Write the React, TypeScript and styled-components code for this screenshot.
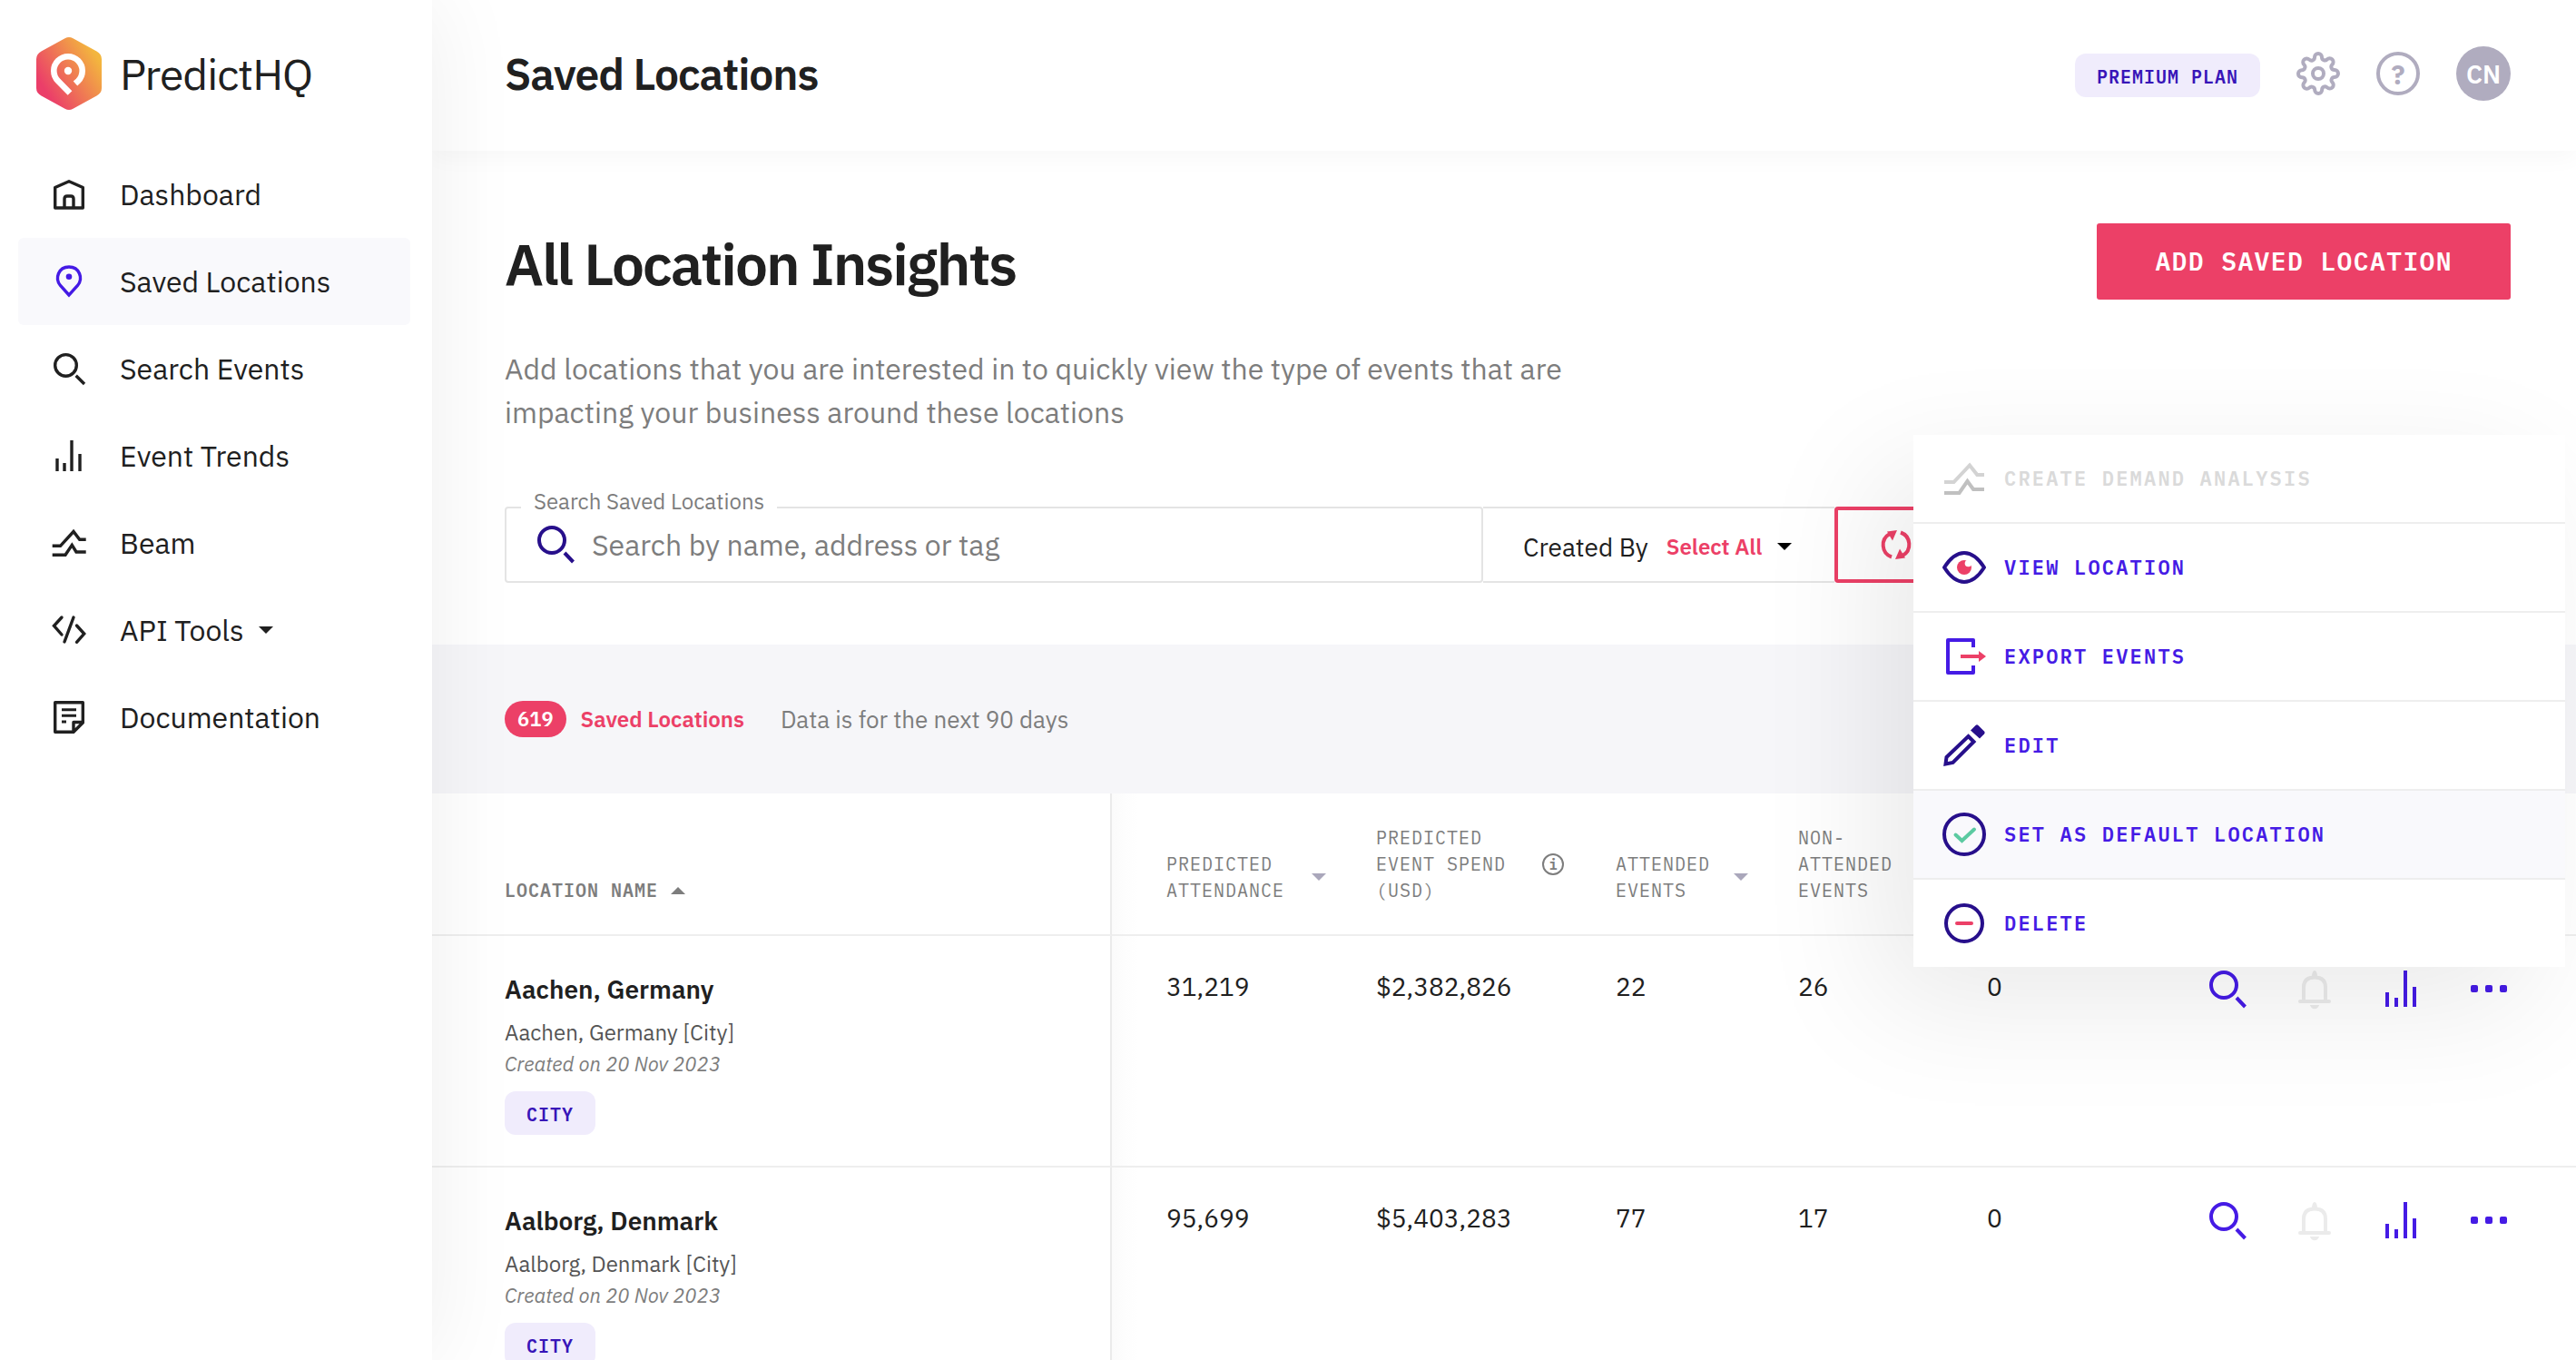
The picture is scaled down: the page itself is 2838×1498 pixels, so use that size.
import React from "react";
import styled, { createGlobalStyle, css } from "styled-components";
import { FiSettings } from "react-icons/fi";

const color = {
  ink: "#202020",
  grey: "#7d7d7d",
  line: "#e4e4e4",
  rule: "#eeeeee",
  pink: "#ec4067",
  violet: "#451be5",
  navy: "#270f8b",
  green: "#5bcaa1",
  muted: "#b0acbf",
  tint: "#f0ecfc",
  tintText: "#3815b8",
  hover: "#f9f9fc",
  band: "#f6f6f9",
};

const sans = `"IBM Plex Sans", Roboto, "Open Sans", sans-serif`;
const mono = `"IBM Plex Mono", "Liberation Mono", monospace`;

const GlobalStyle = createGlobalStyle`
  *, *::before, *::after { box-sizing: border-box; }
  body { margin: 0; background: #fff; color: ${color.ink}; font-family: ${sans}; }
  h1, h2, p, ul { margin: 0; padding: 0; }
  ul { list-style: none; }
  button, input, select { font-family: inherit; color: inherit; }
  button { margin: 0; padding: 0; border: 0; background: none; cursor: pointer; }
  svg { display: block; flex: none; }
`;

/* ---------- Layout shell ---------- */

const Page = styled.div`
  display: flex;
  height: 100vh;
  overflow: hidden;
`;

const Sidebar = styled.aside`
  position: relative;
  z-index: 3;
  flex: none;
  width: 476px;
  background: #fff;
  box-shadow: 0 0 96px rgba(0, 0, 0, 0.07);
`;

const Content = styled.div`
  flex: 1;
  min-width: 0;
  display: flex;
  flex-direction: column;
`;

const Header = styled.header`
  position: relative;
  z-index: 1;
  display: flex;
  flex: none;
  align-items: flex-start;
  justify-content: space-between;
  height: 166px;
  padding: 51px 72px 0 80px;
  background: #fff;
  box-shadow: 0 8px 24px rgba(0, 0, 0, 0.03);
`;

/* ---------- Sidebar ---------- */

const Brand = styled.a`
  display: flex;
  align-items: center;
  gap: 20px;
  padding: 41px 40px 45px;
  color: ${color.ink};
  font-size: 48px;
  letter-spacing: -1px;
  line-height: 80px;
  text-decoration: none;
`;

const NavList = styled.ul`
  padding: 0 24px 0 20px;
`;

const NavLink = styled.a<{ $active?: boolean }>`
  display: flex;
  align-items: center;
  height: 96px;
  padding-left: 36px;
  gap: 36px;
  border-radius: 6px;
  background: ${(p) => (p.$active ? color.hover : "transparent")};
  color: ${color.ink};
  font-size: 32px;
  text-decoration: none;

  & > svg {
    color: ${(p) => (p.$active ? color.violet : color.ink)};
  }
`;

const NavText = styled.span`
  display: flex;
  align-items: center;
  gap: 16px;
`;

/* ---------- Header ---------- */

const PageTitle = styled.h1`
  font-size: 48px;
  font-weight: 600;
  letter-spacing: -1px;
  line-height: 60px;
`;

const HeaderTools = styled.div`
  display: flex;
  align-items: center;
  gap: 40px;
  height: 60px;
`;

const Badge = styled.span`
  display: inline-flex;
  align-items: center;
  height: 48px;
  padding: 4px 24px 0;
  border-radius: 12px;
  background: ${color.tint};
  color: ${color.tintText};
  font: 600 20px/24px ${mono};
  letter-spacing: 1px;
  text-transform: uppercase;
`;

const PlanBadge = styled(Badge)`
  align-self: flex-end;
  margin-bottom: 4px;
`;

const ToolButton = styled.button`
  display: flex;
  align-items: center;
  justify-content: center;
  width: 48px;
  height: 48px;
  color: ${color.muted};
`;

const HelpButton = styled(ToolButton)`
  border: 4px solid ${color.muted};
  border-radius: 50%;
  font-size: 30px;
  font-weight: 700;
`;

const Avatar = styled.button`
  width: 60px;
  height: 60px;
  border-radius: 50%;
  background: ${color.muted};
  color: #fff;
  font-size: 28px;
  font-weight: 600;
`;

/* ---------- Intro ---------- */

const Intro = styled.section`
  padding: 80px 72px 68px 80px;
`;

const IntroTop = styled.div`
  display: flex;
  align-items: flex-start;
  justify-content: space-between;
`;

const Heading = styled.h2`
  font-size: 64px;
  font-weight: 600;
  letter-spacing: -2px;
  line-height: 88px;
`;

const PrimaryButton = styled.button`
  height: 84px;
  padding: 0 64px;
  border-radius: 3px;
  background: ${color.pink};
  color: #fff;
  font: 600 28px/40px ${mono};
  letter-spacing: 0.05em;
  text-transform: uppercase;
`;

const Lead = styled.p`
  max-width: 1200px;
  margin-top: 48px;
  color: ${color.grey};
  font-size: 32px;
  line-height: 48px;
`;

const Filters = styled.div`
  display: flex;
  height: 84px;
  margin-top: 80px;
`;

const SearchField = styled.div`
  position: relative;
  display: flex;
  align-items: center;
  gap: 16px;
  width: 1078px;
  padding: 0 30px;
  border: 2px solid ${color.line};
  border-radius: 4px;
  color: ${color.navy};
`;

const FieldLabel = styled.label`
  position: absolute;
  top: -22px;
  left: 16px;
  padding: 0 14px;
  background: #fff;
  color: ${color.grey};
  font-size: 24px;
  line-height: 28px;
`;

const SearchInput = styled.input`
  flex: 1;
  min-width: 0;
  padding: 0;
  border: 0;
  outline: 0;
  background: none;
  font-size: 32px;
  line-height: 40px;

  &::placeholder {
    color: ${color.grey};
    opacity: 1;
  }
`;

const CreatedBy = styled.div`
  display: flex;
  align-items: center;
  width: 387px;
  padding: 4px 0 0 44px;
  border: solid ${color.line};
  border-width: 2px 0;
`;

const CreatedLabel = styled.label`
  margin-right: 20px;
  font-size: 28px;
`;

const CreatedSelect = styled.select`
  margin-right: 16px;
  padding: 0;
  border: 0;
  outline: 0;
  appearance: none;
  background: none;
  color: ${color.pink};
  font-size: 24px;
  font-weight: 600;
`;

const RefreshButton = styled.button`
  display: flex;
  align-items: center;
  justify-content: center;
  width: 136px;
  border: 4px solid ${color.pink};
  border-radius: 4px;
  color: ${color.pink};
`;

/* ---------- Summary band ---------- */

const Summary = styled.section`
  display: flex;
  align-items: center;
  height: 164px;
  padding: 0 80px;
  background: ${color.band};
`;

const Count = styled.span`
  padding: 0 14px;
  border-radius: 20px;
  background: ${color.pink};
  color: #fff;
  font-size: 22px;
  font-weight: 600;
  line-height: 40px;
`;

const CountLabel = styled.span`
  margin: 0 40px 0 16px;
  color: ${color.pink};
  font-size: 24px;
  font-weight: 600;
`;

const Note = styled.span`
  color: ${color.grey};
  font-size: 26px;
`;

/* ---------- Table ---------- */

const Table = styled.table`
  width: 100%;
  table-layout: fixed;
  border-collapse: separate;
  border-spacing: 0;
`;

const Col = styled.col<{ $width?: number }>`
  ${(p) => p.$width && css`width: ${p.$width}px;`}
`;

const cellBase = css`
  padding: 0;
  border-bottom: 2px solid ${color.rule};
  text-align: left;

  &:first-child {
    padding-left: 80px;
    border-right: 2px solid #ebebeb;
  }

  &:nth-child(2) {
    padding-left: 60px;
    background: linear-gradient(to right, #fbfbfb, #fff 28px);
  }
`;

const HeadCell = styled.th`
  ${cellBase}
  height: 157px;
  padding-bottom: 34px;
  vertical-align: bottom;
`;

const SortButton = styled.button<{ $bold?: boolean; $gap: number }>`
  display: flex;
  align-items: center;
  gap: ${(p) => p.$gap}px;
  color: ${color.grey};
  font: ${(p) => (p.$bold ? 600 : 400)} 20px/29px ${mono};
  letter-spacing: 1px;
  text-align: left;
  text-transform: uppercase;
  white-space: pre;
`;

const InfoMark = styled.span`
  display: flex;
  align-items: center;
  justify-content: center;
  width: 24px;
  height: 24px;
  border: 2px solid ${color.grey};
  border-radius: 50%;
  font: 600 16px/20px ${mono};
  letter-spacing: 0;
  text-transform: none;
`;

const Cell = styled.td`
  ${cellBase}
  height: 255px;
  padding-top: 35px;
  vertical-align: top;
  font-size: 28px;
  line-height: 42px;
`;

const NameCell = styled(Cell)`
  padding-top: 39px;
`;

const PlaceName = styled.a`
  display: block;
  color: ${color.ink};
  font-size: 28px;
  font-weight: 600;
  line-height: 40px;
  text-decoration: none;
`;

const PlaceAddress = styled.div`
  margin-top: 10px;
  color: #555;
  font-size: 24px;
  line-height: 34px;
`;

const PlaceDate = styled.div`
  margin-bottom: 12px;
  color: ${color.grey};
  font-size: 22px;
  font-style: italic;
  line-height: 36px;
`;

const PlaceTag = styled(Badge)`
  display: flex;
  width: max-content;
`;

const LastColumn = styled.div`
  display: flex;
  justify-content: space-between;
`;

const Actions = styled.div`
  display: flex;
  gap: 48px;
  padding-right: 72px;
`;

const IconButton = styled.button`
  display: block;
  width: 48px;
  height: 48px;
  color: ${color.violet};

  &:disabled {
    color: #ebebeb;
    cursor: default;
  }
`;

/* ---------- Row menu ---------- */

const MenuAnchor = styled.div`
  position: relative;
`;

const Menu = styled.div`
  position: absolute;
  right: -60px;
  bottom: calc(100% + 1px);
  z-index: 2;
  width: 718px;
  background: #fff;
  box-shadow: -40px 40px 128px rgba(0, 0, 0, 0.085);
`;

const MenuItem = styled.button<{ $active?: boolean }>`
  display: flex;
  align-items: center;
  gap: 20px;
  width: 100%;
  height: 96px;
  padding: 0 32px;
  background: ${(p) => (p.$active ? color.hover : "#fff")};
  color: ${color.violet};
  font: 600 22px/32px ${mono};
  letter-spacing: 0.1em;
  text-transform: uppercase;

  &:not(:first-child) {
    height: 98px;
    border-top: 2px solid ${color.rule};
  }

  &:disabled {
    color: #dadada;
    cursor: default;
  }
`;

/* ---------- Icons ---------- */

const NavSvg = ({ children, cap = "butt" }: { children: React.ReactNode; cap?: "butt" | "round" }) => (
  <svg width="40" height="40" viewBox="0 0 40 40" fill="none" stroke="currentColor" strokeWidth="3.4" strokeLinecap={cap} aria-hidden="true">
    {children}
  </svg>
);

const BigSvg = ({ children }: { children: React.ReactNode }) => (
  <svg width="48" height="48" viewBox="0 0 48 48" fill="none" stroke="currentColor" strokeWidth="4" aria-hidden="true">
    {children}
  </svg>
);

const Caret = ({ up, fill = "currentColor" }: { up?: boolean; fill?: string }) => (
  <svg width="16" height="8" viewBox="0 0 16 8" fill={fill} aria-hidden="true">
    <path d={up ? "M8 0 16 8H0Z" : "M0 0H16L8 8Z"} />
  </svg>
);

const Logo = () => (
  <svg width="72" height="80" viewBox="0 0 72 80" aria-hidden="true">
    <defs>
      <linearGradient id="brand" gradientUnits="userSpaceOnUse" x1="8" y1="56" x2="66" y2="20">
        <stop offset="0" stopColor="#eb3e69" />
        <stop offset="1" stopColor="#f3b63e" />
      </linearGradient>
    </defs>
    <path
      fill="url(#brand)"
      d="M31.5 1.2Q36-1.2 40.5 1.2L66.5 15.5Q72 18.5 72 24V56Q72 61.5 66.5 64.5L40.5 78.8Q36 81.2 31.5 78.8L5.5 64.5Q0 61.5 0 56V24Q0 18.5 5.5 15.5Z"
    />
    <path fill="none" stroke="#fff" strokeWidth="6.6" d="M43 51L46.1 48.1A15.7 15.7 0 1 0 23.9 48.1L37 61.5" />
    <circle cx="35" cy="37" r="4.2" fill="#fff" />
  </svg>
);

const HomeIcon = () => (
  <NavSvg>
    <path strokeLinejoin="round" d="M4.7 12.5 20 5.8l15.3 6.7V35H4.7Z" />
    <path d="M15 35V25q0-3 3-3h4q3 0 3 3V35" />
  </NavSvg>
);
const PinIcon = () => (
  <NavSvg>
    <path d="M20 35 10.5 24.5C4 16.500 8.5 4 20 4S36 16.500 29.5 24.5Z" />
    <circle cx="20" cy="14.800" r="3.300" fill="currentColor" stroke="none" />
  </NavSvg>
);
const NavSearchIcon = () => (
  <NavSvg>
    <circle cx="16.5" cy="16.4" r="11.8" />
    <path d="M27.7 27.7 37 37" />
  </NavSvg>
);
const NavBarsIcon = () => (
  <NavSvg>
    <path d="M7 23V37M15 28V37M23 3V37M32 18V37" />
  </NavSvg>
);
const NavBeamIcon = () => (
  <NavSvg>
    <path d="M1.7 23.3H10.5L25 7.5l6.7 8.8h7M1.7 33.3H16l7.3-11L28 30H38.7" />
  </NavSvg>
);
const CodeIcon = () => (
  <NavSvg cap="round">
    <path d="M12 6 3.5 15.3 12 25M25 6 15 33M28.5 15l8.2 9-8.2 9.3" />
  </NavSvg>
);
const DocIcon = () => (
  <NavSvg>
    <path strokeLinejoin="round" d="M4.7 36.3V3.7H35.3V26L25 36.3ZM25 36V25.5H35" />
    <path strokeWidth="3" d="M12 11.7H28M12 18.3H28M12 25H17" />
  </NavSvg>
);

const SearchIcon = () => (
  <BigSvg>
    <circle cx="20" cy="19" r="14" />
    <path d="M34 33 43.5 43" />
  </BigSvg>
);
const BellIcon = () => (
  <BigSvg>
    <path d="M12 37V21.500Q12 10.500 24 10.500T36 21.500V37" />
    <path strokeLinecap="round" d="M8 37H40" />
    <path fill="currentColor" stroke="none" d="M21 9Q21.500 3 24 3T27 9ZM18.800 41H29.200Q27.500 45.200 24 45.200T18.800 41Z" />
  </BigSvg>
);
const BarsIcon = () => (
  <BigSvg>
    <path d="M8 27V43M18 33V43M28 3V43M38 21V43" />
  </BigSvg>
);
const DotsIcon = () => (
  <BigSvg>
    <g fill="currentColor" stroke="none">
      <rect x="4" y="19" width="8" height="8" rx="2" />
      <rect x="20" y="19" width="8" height="8" rx="2" />
      <rect x="36" y="19" width="8" height="8" rx="2" />
    </g>
  </BigSvg>
);
const RefreshIcon = () => (
  <svg width="36" height="36" viewBox="-18 -18 36 36" fill="currentColor" aria-hidden="true">
    {[0, 180].map((turn) => (
      <g key={turn} transform={`rotate(${turn})`}>
        <path d="M-5 13.5A14 14 0 0 1-7-12" fill="none" stroke="currentColor" strokeWidth="4" />
        <path d="M-10-14.5 1-16-4-4.5Z" />
      </g>
    ))}
  </svg>
);

const BeamIcon = () => (
  <BigSvg>
    <path stroke="#d3d3d3" d="M2 28H12.5L30 9.5l8.3 10.5H46" />
    <path stroke="#c0c0c0" d="M2 40H18.5L27.5 27 34 36H46" />
  </BigSvg>
);
const EyeIcon = () => (
  <BigSvg>
    <path stroke={color.navy} strokeLinejoin="round" d="M2 24C9 13 16 8 24 8S39 13 46 24C39 35 32 40 24 40S9 35 2 24Z" />
    <circle cx="24" cy="24" r="8" fill={color.pink} stroke="none" />
    <circle cx="28.5" cy="19.5" r="3.8" fill="#fff" stroke="none" />
  </BigSvg>
);
const ExportIcon = () => (
  <BigSvg>
    <path stroke={color.violet} strokeLinejoin="round" d="M34 14V6H6V42H34V34" />
    <path stroke={color.pink} d="M20 24H41" />
    <path fill={color.pink} stroke="none" d="M40 18 48 24 40 30Z" />
  </BigSvg>
);
const PencilIcon = () => (
  <BigSvg>
    <path stroke={color.navy} d="M28.5 14 34.5 20 11.5 43 3.5 44.5 4.5 37Z" />
    <path fill={color.navy} stroke="none" d="M36.5 2Q38 .5 39.5 2L46 8.5Q47.5 10 46 11.5L41 16.5 31 7.5Z" />
  </BigSvg>
);
const CheckIcon = () => (
  <BigSvg>
    <circle cx="24" cy="24" r="22" stroke={color.navy} />
    <path stroke={color.green} strokeLinecap="round" d="M14.5 24.5 21.5 31 35 18.5" />
  </BigSvg>
);
const MinusIcon = () => (
  <BigSvg>
    <circle cx="24" cy="24" r="20" stroke={color.navy} />
    <path stroke={color.pink} strokeLinecap="round" d="M16 24H32" />
  </BigSvg>
);

/* ---------- Data ---------- */

const navItems = [
  { label: "Dashboard", Icon: HomeIcon },
  { label: "Saved Locations", Icon: PinIcon, active: true },
  { label: "Search Events", Icon: NavSearchIcon },
  { label: "Event Trends", Icon: NavBarsIcon },
  { label: "Beam", Icon: NavBeamIcon },
  { label: "API Tools", Icon: CodeIcon, expandable: true },
  { label: "Documentation", Icon: DocIcon },
];

const menuItems = [
  { label: "Create demand analysis", Icon: BeamIcon, disabled: true },
  { label: "View location", Icon: EyeIcon },
  { label: "Export events", Icon: ExportIcon },
  { label: "Edit", Icon: PencilIcon },
  { label: "Set as default location", Icon: CheckIcon, active: true },
  { label: "Delete", Icon: MinusIcon },
];

const locations = [
  { name: "Aachen, Germany", created: "20 Nov 2023", values: ["31,219", "$2,382,826", "22", "26"], last: "0", menuOpen: true },
  { name: "Aalborg, Denmark", created: "20 Nov 2023", values: ["95,699", "$5,403,283", "77", "17"], last: "0", menuOpen: false },
];

const columnWidths = [749, 291, 264, 201, 208];

/* ---------- App ---------- */

const RowMenu = () => (
  <Menu role="menu">
    {menuItems.map(({ label, Icon, disabled, active }) => (
      <MenuItem key={label} type="button" role="menuitem" disabled={disabled} $active={active}>
        <Icon />
        {label}
      </MenuItem>
    ))}
  </Menu>
);

const RowActions = ({ menuOpen }: { menuOpen: boolean }) => (
  <Actions>
    <IconButton type="button" aria-label="Search events">
      <SearchIcon />
    </IconButton>
    <IconButton type="button" aria-label="Notifications" disabled>
      <BellIcon />
    </IconButton>
    <IconButton type="button" aria-label="Event trends">
      <BarsIcon />
    </IconButton>
    <MenuAnchor>
      <IconButton type="button" aria-label="More actions" aria-haspopup="menu" aria-expanded={menuOpen}>
        <DotsIcon />
      </IconButton>
      {menuOpen && <RowMenu />}
    </MenuAnchor>
  </Actions>
);

export default function App() {
  return (
    <Page>
      <GlobalStyle />
      <Sidebar>
        <Brand href="#home">
          <Logo />
          PredictHQ
        </Brand>
        <nav>
          <NavList>
            {navItems.map(({ label, Icon, active, expandable }) => (
              <li key={label}>
                <NavLink href="#" $active={active} aria-current={active ? "page" : undefined}>
                  <Icon />
                  <NavText>
                    {label}
                    {expandable && <Caret />}
                  </NavText>
                </NavLink>
              </li>
            ))}
          </NavList>
        </nav>
      </Sidebar>

      <Content>
        <Header>
          <PageTitle>Saved Locations</PageTitle>
          <HeaderTools>
            <PlanBadge>Premium plan</PlanBadge>
            <ToolButton type="button" aria-label="Settings">
              <FiSettings size={48} />
            </ToolButton>
            <HelpButton type="button" aria-label="Help">?</HelpButton>
            <Avatar type="button">CN</Avatar>
          </HeaderTools>
        </Header>

        <main>
          <Intro>
            <IntroTop>
              <Heading>All Location Insights</Heading>
              <PrimaryButton type="button">Add saved location</PrimaryButton>
            </IntroTop>
            <Lead>
              Add locations that you are interested in to quickly view the type of events that are
              impacting your business around these locations
            </Lead>
            <Filters>
              <SearchField>
                <FieldLabel htmlFor="search">Search Saved Locations</FieldLabel>
                <SearchIcon />
                <SearchInput id="search" type="text" placeholder="Search by name, address or tag" />
              </SearchField>
              <CreatedBy>
                <CreatedLabel htmlFor="created-by">Created By</CreatedLabel>
                <CreatedSelect id="created-by">
                  <option>Select All</option>
                </CreatedSelect>
                <Caret fill="#000" />
              </CreatedBy>
              <RefreshButton type="button" aria-label="Refresh">
                <RefreshIcon />
              </RefreshButton>
            </Filters>
          </Intro>

          <Summary>
            <Count>619</Count>
            <CountLabel>Saved Locations</CountLabel>
            <Note>Data is for the next 90 days</Note>
          </Summary>

          <Table>
            <colgroup>
              {columnWidths.map((width, i) => (
                <Col key={i} $width={width} />
              ))}
              <Col />
            </colgroup>
            <thead>
              <tr>
                <HeadCell>
                  <SortButton type="button" $bold $gap={14}>
                    Location name
                    <Caret up />
                  </SortButton>
                </HeadCell>
                <HeadCell>
                  <SortButton type="button" $gap={30}>
                    {"Predicted\nattendance"}
                    <Caret fill="#aaa7bb" />
                  </SortButton>
                </HeadCell>
                <HeadCell>
                  <SortButton type="button" $gap={40}>
                    {"Predicted\nevent spend\n(USD)"}
                    <InfoMark>i</InfoMark>
                  </SortButton>
                </HeadCell>
                <HeadCell>
                  <SortButton type="button" $gap={26}>
                    {"Attended\nevents"}
                    <Caret fill="#aaa7bb" />
                  </SortButton>
                </HeadCell>
                <HeadCell>
                  <SortButton type="button" $gap={26}>
                    {"Non-\nattended\nevents"}
                  </SortButton>
                </HeadCell>
                <HeadCell />
              </tr>
            </thead>
            <tbody>
              {locations.map(({ name, created, values, last, menuOpen }) => (
                <tr key={name}>
                  <NameCell>
                    <PlaceName href="#">{name}</PlaceName>
                    <PlaceAddress>{name} [City]</PlaceAddress>
                    <PlaceDate>Created on {created}</PlaceDate>
                    <PlaceTag>City</PlaceTag>
                  </NameCell>
                  {values.map((value, i) => (
                    <Cell key={i}>{value}</Cell>
                  ))}
                  <Cell>
                    <LastColumn>
                      {last}
                      <RowActions menuOpen={menuOpen} />
                    </LastColumn>
                  </Cell>
                </tr>
              ))}
            </tbody>
          </Table>
        </main>
      </Content>
    </Page>
  );
}
